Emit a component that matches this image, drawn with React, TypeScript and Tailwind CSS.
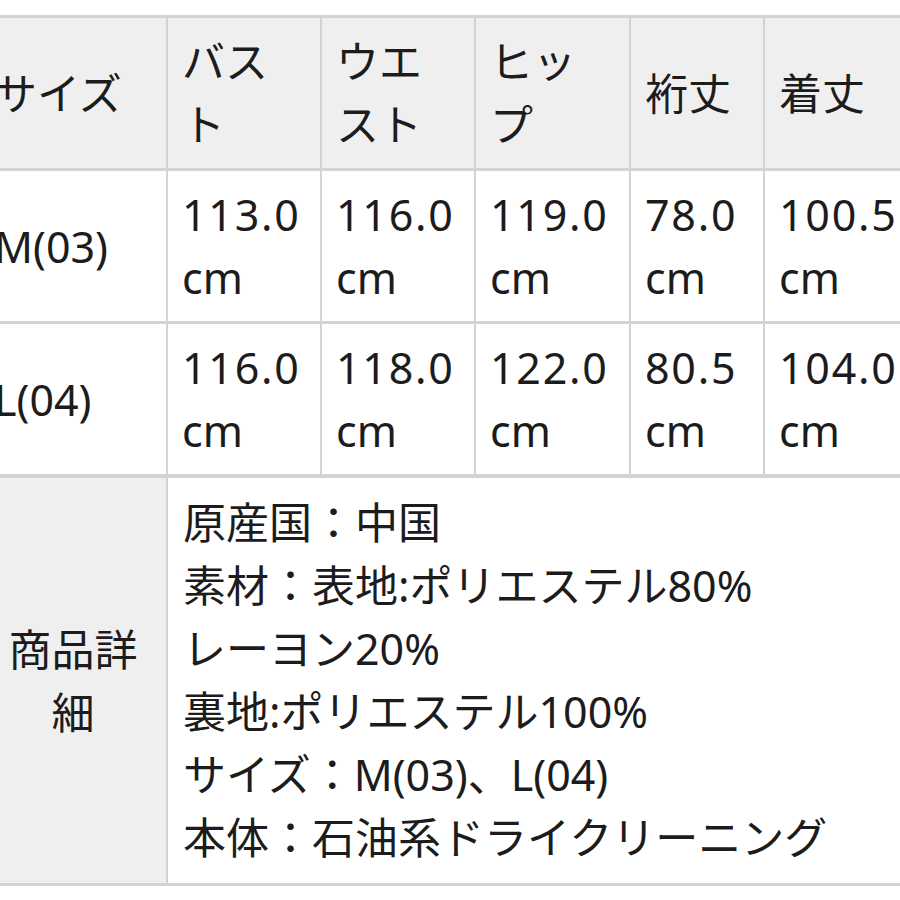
import React from 'react';

const FONT = '[font-family:"Noto_Sans","Noto_Sans_CJK_JP",sans-serif]';

const headers: string[][] = [
  ['バス', 'ト'],
  ['ウエ', 'スト'],
  ['ヒッ', 'プ'],
  ['裄丈'],
  ['着丈'],
];

const rows: { size: string; values: string[] }[] = [
  { size: 'M(03)', values: ['113.0', '116.0', '119.0', '78.0', '100.5'] },
  { size: 'L(04)', values: ['116.0', '118.0', '122.0', '80.5', '104.0'] },
];

const details = [
  '原産国：中国',
  '素材：表地:ポリエステル80%',
  'レーヨン20%',
  '裏地:ポリエステル100%',
  'サイズ：M(03)、L(04)',
  '本体：石油系ドライクリーニング',
];

// shared cell look; text alignment is set per cell
const cell = 'border-x-2 border-y-[3px] border-[#d3d3d3] px-[14px] py-[12px] align-middle font-normal';

export default function App() {
  return (
    <div className={`h-[900px] w-[900px] overflow-hidden bg-white pt-[15px] ${FONT}`}>
      <table className="ml-[-22px] w-[955px] table-fixed border-collapse text-[43px] leading-[63px] text-[#1c1c1c]">
        <colgroup>
          <col className="w-[188px]" />
          <col className="w-[154px]" />
          <col className="w-[154px]" />
          <col className="w-[155px]" />
          <col className="w-[134px]" />
          <col className="w-[170px]" />
        </colgroup>
        <thead>
          <tr className="bg-[#efefef]">
            <th className={`${cell} text-left`}>サイズ</th>
            {headers.map((lines, i) => (
              <th key={i} className={`${cell} text-left`}>
                {lines.map((l, j) => (
                  <div key={j} className="whitespace-nowrap">
                    {l}
                  </div>
                ))}
              </th>
            ))}
          </tr>
        </thead>
        <tbody>
          {rows.map(row => (
            <tr key={row.size}>
              <td className={`${cell} text-left`}>{row.size}</td>
              {row.values.map((v, i) => (
                <td key={i} className={`${cell} text-left`}>
                  <div className="whitespace-nowrap tracking-[0.04em]">{v}</div>
                  <div>cm</div>
                </td>
              ))}
            </tr>
          ))}
          <tr>
            <td className={`${cell} border-t-4 bg-[#efefef] text-center`}>
              <div>商品詳</div>
              <div>細</div>
            </td>
            <td
              colSpan={5}
              className={`${cell} border-t-4 border-r-0 px-[15px] pt-[13px] pb-[14px] text-left`}
            >
              {details.map(line => (
                <div key={line} className="whitespace-nowrap">
                  {line}
                </div>
              ))}
            </td>
          </tr>
        </tbody>
      </table>
    </div>
  );
}
